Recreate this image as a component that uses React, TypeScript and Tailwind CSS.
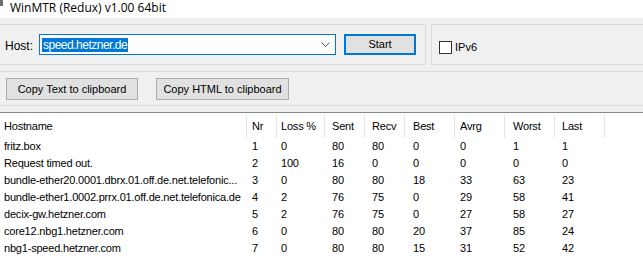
import React from "react";

const columns = [
	{ label: "Hostname", width: "w-[247px]", pad: "pl-[4px]" },
	{ label: "Nr", width: "w-[30px]", pad: "pl-[5px]" },
	{ label: "Loss %", width: "w-[48px]", pad: "pl-[4px]" },
	{ label: "Sent", width: "w-[40px]", pad: "pl-[7px]" },
	{ label: "Recv", width: "w-[40px]", pad: "pl-[7px]" },
	{ label: "Best", width: "w-[50px]", pad: "pl-[8px]" },
	{ label: "Avrg", width: "w-[50px]", pad: "pl-[5px]" },
	{ label: "Worst", width: "w-[50px]", pad: "pl-[8px]" },
	{ label: "Last", width: "w-[50px]", pad: "pl-[7px]" },
];

const rows = [
	["fritz.box", "1", "0", "80", "80", "0", "0", "1", "1"],
	["Request timed out.", "2", "100", "16", "0", "0", "0", "0", "0"],
	["bundle-ether20.0001.dbrx.01.off.de.net.telefonic...", "3", "0", "80", "80", "18", "33", "63", "23"],
	["bundle-ether1.0002.prrx.01.off.de.net.telefonica.de", "4", "2", "76", "75", "0", "29", "58", "41"],
	["decix-gw.hetzner.com", "5", "2", "76", "75", "0", "27", "58", "27"],
	["core12.nbg1.hetzner.com", "6", "0", "80", "80", "20", "37", "85", "24"],
	["nbg1-speed.hetzner.com", "7", "0", "80", "80", "15", "31", "52", "42"],
];

const WinButton = ({ children, className }: { children: React.ReactNode; className?: string }) => (
	<div className={`flex h-[22px] items-center justify-center border border-[#adadad] bg-[#e1e1e1] text-[11px] text-black ${className ?? ""}`}>
		{children}
	</div>
);

export default function App() {
	return (
		<div className="flex h-[273px] w-[643px] flex-col overflow-hidden bg-[#f0f0f0] font-['Liberation_Sans',Arial,sans-serif] text-black">
			{/* title bar */}
			<div className="relative flex h-[18px] shrink-0 items-center bg-white pl-[10px] font-['Open_Sans',sans-serif] text-[12px]">
				<div className="absolute left-0 top-0 h-[6px] w-[3px] bg-[#6b6b6b]" />
				<span className="-mt-[3px]">WinMTR (Redux) v1.00 64bit</span>
			</div>

			{/* host group */}
			<div className="flex pt-[6px]">
				<div className="flex h-[41px] w-[426px] items-start border-y border-r border-[#dcdcdc] pt-[9px]">
					<span className="ml-[5px] mt-[3px] text-[12px]">Host:</span>
					<div className="ml-[6px] flex h-[21px] w-[297px] items-center border border-[#0078d7] bg-white pl-[2px]">
						<span className="bg-[#0078d7] px-px text-[12px] leading-[14px] tracking-[-0.5px] text-white">speed.hetzner.de</span>
						<svg className="ml-auto mr-[5px]" width="9" height="6" viewBox="0 0 9 6">
							<path d="M0.5 0.5 L4.5 4.5 L8.5 0.5" fill="none" stroke="#555" strokeWidth="1" />
						</svg>
					</div>
					<div className="ml-[8px] flex h-[21px] w-[72px] items-center justify-center border-2 border-[#0078d7] bg-[#e1e1e1] text-[11px]">
						Start
					</div>
				</div>
				<div className="ml-[5px] flex h-[41px] flex-1 items-center border-y border-l border-[#dcdcdc] pl-[7px]">
					<div className="mt-[6px] h-[13px] w-[13px] border border-[#333] bg-white" />
					<span className="ml-[3px] mt-[6px] text-[11px]">IPv6</span>
				</div>
			</div>

			{/* clipboard buttons */}
			<div className="mt-[6px] flex h-[35px] items-center gap-[18px] border-y border-[#dadada] pl-[6px] pt-[1px]">
				<WinButton className="w-[132px]">Copy Text to clipboard</WinButton>
				<WinButton className="w-[133px]">Copy HTML to clipboard</WinButton>
			</div>

			{/* hop list */}
			<div className="mt-[6px] flex-1 border-t border-[#828790] bg-white text-[11px] tracking-[-0.2px]">
				<div className="flex h-[25px] items-center pt-[2px]">
					{columns.map((c) => (
						<div key={c.label} className={`${c.width} ${c.pad} flex h-full items-center border-r border-[#e5e5e5]`}>
							{c.label}
						</div>
					))}
				</div>
				{rows.map((r) => (
					<div key={r[1]} className="flex h-[17px] items-center">
						{r.map((cell, i) => (
							<div key={i} className={`${columns[i].width} ${columns[i].pad} overflow-hidden whitespace-nowrap`}>
								{cell}
							</div>
						))}
					</div>
				))}
			</div>
		</div>
	);
}
